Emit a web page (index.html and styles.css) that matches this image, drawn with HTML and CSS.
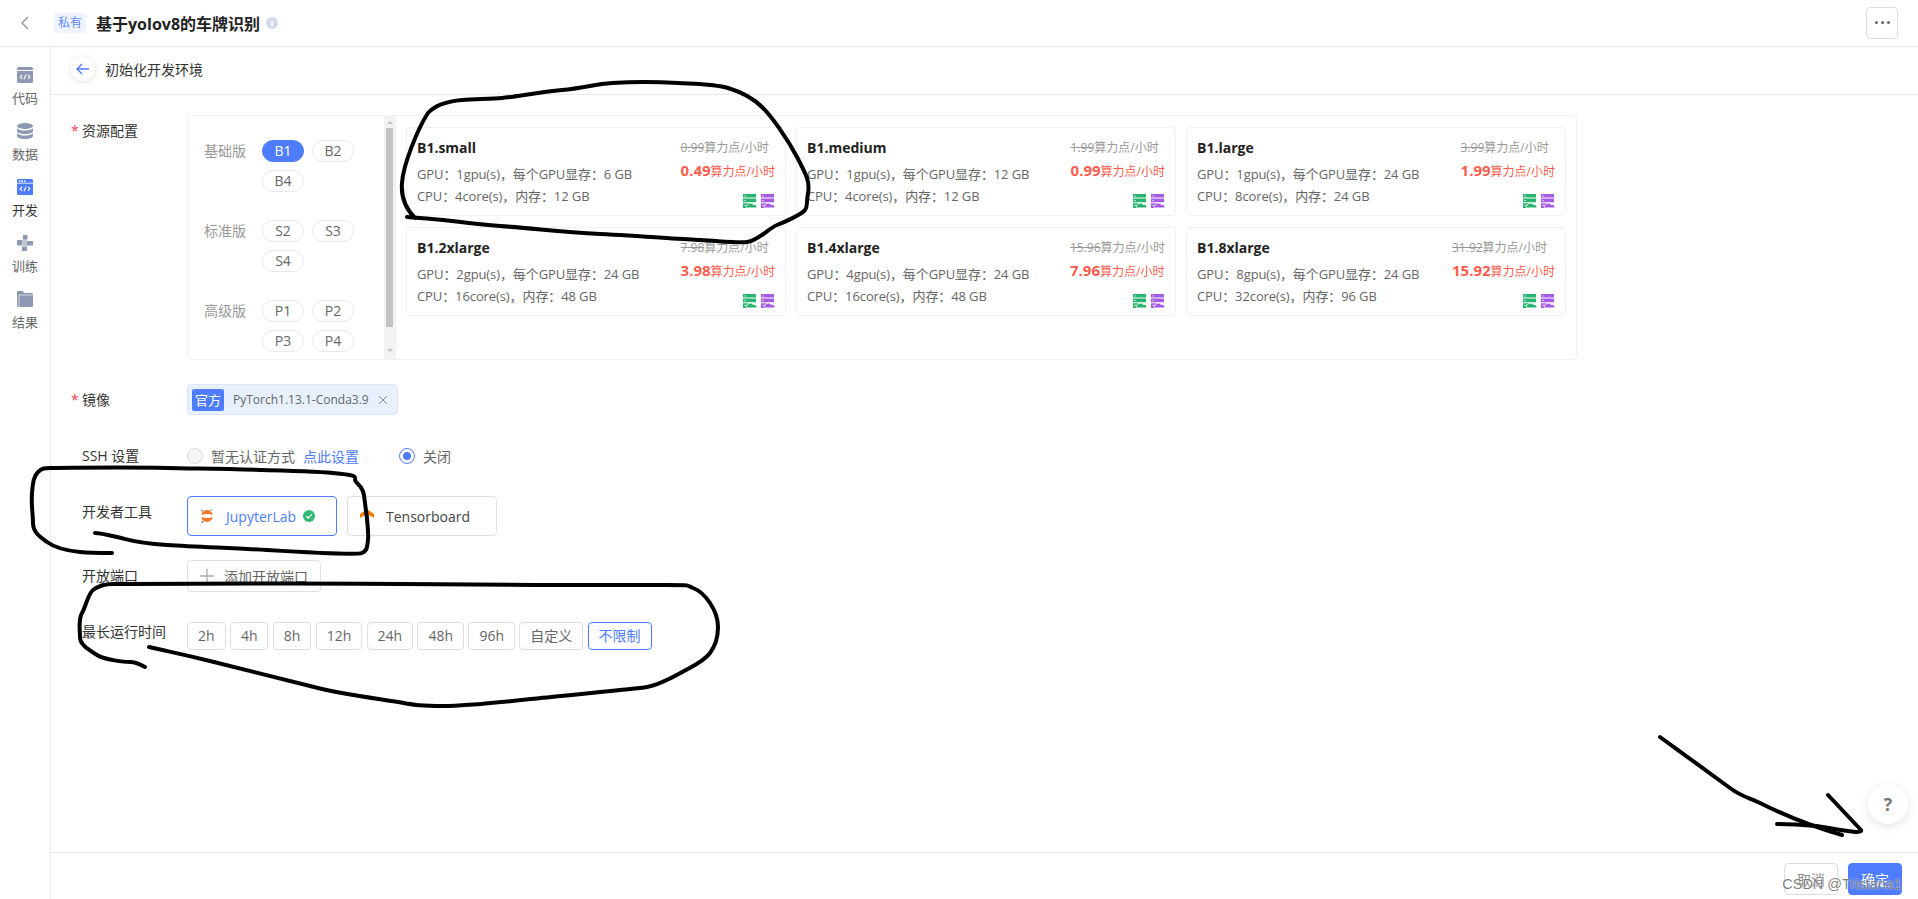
FILE: index.html
```html
<!DOCTYPE html>
<html lang="zh-CN">
<head>
    <meta charset="UTF-8">
    <title>初始化开发环境</title>
    <link rel="stylesheet" href="styles.css">
</head>
<body>
    <svg width="0" height="0" class="defs">
        <symbol id="server" viewBox="0 0 14 14">
            <path fill="currentColor" d="M0 0h13v3.6H0zM0 4.6h13v3.6H0zM0 9.2h6V14H0z"/>
            <path fill="#fff" d="M1.5 1.4h1.2v1H1.5zM1.5 6h1.2v1H1.5zM1.5 10.8h1.2v1H1.5z"/>
            <path fill="currentColor" stroke="#fff" stroke-width="1" d="M4.6 14c-1.6 0-2.2-2.6-.2-3 .5-2.2 4.400-2.700 5.600-.6 2-.4 4.500.6 4 3.600z"/>
        </symbol>
        <symbol id="code" viewBox="0 0 16 16">
            <path fill="currentColor" d="M1.500 0h13A1.500 1.500 0 0 1 16 1.500V3H0V1.500A1.500 1.500 0 0 1 1.500 0zM0 4h16v10.500a1.500 1.500 0 0 1-1.500 1.500h-13A1.500 1.500 0 0 1 0 14.500z"/>
            <path fill="none" stroke="#fff" stroke-width="1.100" d="M5 7.800 3.200 9.800 5 11.800M11 7.800l1.800 2-1.800 2M9 7.400 7 12.200"/>
        </symbol>
    </svg>

    <header class="topbar">
        <svg class="chevron" width="10" height="14" viewBox="0 0 10 14"><path d="M8 1 2 7l6 6" fill="none" stroke="#8a8f99" stroke-width="1.300"/></svg>
        <span class="private-tag">私有</span>
        <h1 class="project-title">基于yolov8的车牌识别</h1>
        <span class="info-icon">i</span>
        <button class="more-btn"><i></i><i></i><i></i></button>
    </header>

    <div class="shell">
        <nav class="sidebar">
            <a class="nav-item">
                <svg class="nav-icon" width="16" height="16"><use href="#code"/></svg>
                代码
            </a>
            <a class="nav-item">
                <svg class="nav-icon" width="16" height="16" viewBox="0 0 16 16">
                    <ellipse cx="8" cy="3" rx="8" ry="3" fill="currentColor"/>
                    <path fill="currentColor" d="M0 5.200C1.500 7 5 7.500 8 7.500s6.500-.5 8-2.300V8c0 1.700-3.600 3-8 3S0 9.700 0 8zM0 10.200C1.500 12 5 12.500 8 12.500s6.500-.5 8-2.300V13c0 1.700-3.600 3-8 3s-8-1.300-8-3z"/>
                </svg>
                数据
            </a>
            <a class="nav-item is-current">
                <svg class="nav-icon" width="16" height="16" viewBox="0 0 16 16">
                    <path fill="#4e7cff" d="M1.500 0h13A1.500 1.500 0 0 1 16 1.500V16H1.500A1.500 1.500 0 0 1 0 14.500V1.500A1.500 1.500 0 0 1 1.500 0z"/>
                    <path fill="none" stroke="#fff" stroke-width=".8" d="M0 4.200h16"/>
                    <path fill="#fff" d="M2 1.500h1.500V3H2zM4.500 1.500H6V3H4.500zM7 1.500h1.500V3H7z"/>
                    <path fill="none" stroke="#fff" stroke-width="1.100" d="M5 7.800 3.200 9.800 5 11.800M11 7.800l1.800 2-1.800 2M9 7.400 7 12.200"/>
                </svg>
                开发
            </a>
            <a class="nav-item">
                <svg class="nav-icon" width="16" height="16" viewBox="0 0 16 16">
                    <path fill="currentColor" d="M0 5h5.500v5.500H0zM6 0h4.500v4.500H6zM10 6h6v4.500h-6zM5 11.500h5V16H5z"/>
                    <path fill="currentColor" d="M6 4.500h4V11H6z" opacity=".55"/>
                </svg>
                训练
            </a>
            <a class="nav-item">
                <svg class="nav-icon" width="16" height="16" viewBox="0 0 16 16">
                    <path fill="currentColor" d="M1 0h4.500l2 2H15a1 1 0 0 1 1 1v12a1 1 0 0 1-1 1H1a1 1 0 0 1-1-1V1a1 1 0 0 1 1-1z"/>
                    <path fill="none" stroke="#fff" stroke-width=".8" opacity=".8" d="M2 16V4h14"/>
                </svg>
                结果
            </a>
        </nav>

        <main class="main">
            <div class="subheader">
                <button class="back-btn">
                    <svg width="14" height="12" viewBox="0 0 14 12"><path d="M6 1 1 6l5 5M1 6h12" fill="none" stroke="#4e7cff" stroke-width="1.300"/></svg>
                </button>
                <span>初始化开发环境</span>
            </div>

            <div class="form">
                <div class="form-row">
                    <label class="form-label"><b>*</b>资源配置</label>
                    <div class="resource-panel">
                        <div class="spec-side">
                            <div class="spec-groups">
                                <div class="spec-group">
                                    <span class="spec-name">基础版</span>
                                    <div class="pills">
                                        <span class="pill is-active">B1</span>
                                        <span class="pill">B2</span>
                                        <span class="pill">B4</span>
                                    </div>
                                </div>
                                <div class="spec-group">
                                    <span class="spec-name">标准版</span>
                                    <div class="pills">
                                        <span class="pill">S2</span>
                                        <span class="pill">S3</span>
                                        <span class="pill">S4</span>
                                    </div>
                                </div>
                                <div class="spec-group">
                                    <span class="spec-name">高级版</span>
                                    <div class="pills">
                                        <span class="pill">P1</span>
                                        <span class="pill">P2</span>
                                        <span class="pill">P3</span>
                                        <span class="pill">P4</span>
                                    </div>
                                </div>
                            </div>
                            <div class="scrollbar">
                                <i class="arrow-up"></i>
                                <div class="thumb"></div>
                                <i class="arrow-down"></i>
                            </div>
                        </div>

                        <div class="cards">
                            <div class="card">
                                <div class="card-info">
                                    <h3>B1.small</h3>
                                    <p>GPU：1gpu(s)，每个GPU显存：6 GB</p>
                                    <p>CPU：4core(s)，内存：12 GB</p>
                                </div>
                                <div class="card-price">
                                    <div class="price-old"><s>0.99</s>算力点/小时</div>
                                    <div class="price-now"><b>0.49</b>算力点/小时</div>
                                    <div class="card-icons">
                                        <svg class="green" width="14" height="14"><use href="#server"/></svg>
                                        <svg class="purple" width="14" height="14"><use href="#server"/></svg>
                                    </div>
                                </div>
                            </div>
                            <div class="card">
                                <div class="card-info">
                                    <h3>B1.medium</h3>
                                    <p>GPU：1gpu(s)，每个GPU显存：12 GB</p>
                                    <p>CPU：4core(s)，内存：12 GB</p>
                                </div>
                                <div class="card-price">
                                    <div class="price-old"><s>1.99</s>算力点/小时</div>
                                    <div class="price-now"><b>0.99</b>算力点/小时</div>
                                    <div class="card-icons">
                                        <svg class="green" width="14" height="14"><use href="#server"/></svg>
                                        <svg class="purple" width="14" height="14"><use href="#server"/></svg>
                                    </div>
                                </div>
                            </div>
                            <div class="card">
                                <div class="card-info">
                                    <h3>B1.large</h3>
                                    <p>GPU：1gpu(s)，每个GPU显存：24 GB</p>
                                    <p>CPU：8core(s)，内存：24 GB</p>
                                </div>
                                <div class="card-price">
                                    <div class="price-old"><s>3.99</s>算力点/小时</div>
                                    <div class="price-now"><b>1.99</b>算力点/小时</div>
                                    <div class="card-icons">
                                        <svg class="green" width="14" height="14"><use href="#server"/></svg>
                                        <svg class="purple" width="14" height="14"><use href="#server"/></svg>
                                    </div>
                                </div>
                            </div>
                            <div class="card">
                                <div class="card-info">
                                    <h3>B1.2xlarge</h3>
                                    <p>GPU：2gpu(s)，每个GPU显存：24 GB</p>
                                    <p>CPU：16core(s)，内存：48 GB</p>
                                </div>
                                <div class="card-price">
                                    <div class="price-old"><s>7.98</s>算力点/小时</div>
                                    <div class="price-now"><b>3.98</b>算力点/小时</div>
                                    <div class="card-icons">
                                        <svg class="green" width="14" height="14"><use href="#server"/></svg>
                                        <svg class="purple" width="14" height="14"><use href="#server"/></svg>
                                    </div>
                                </div>
                            </div>
                            <div class="card">
                                <div class="card-info">
                                    <h3>B1.4xlarge</h3>
                                    <p>GPU：4gpu(s)，每个GPU显存：24 GB</p>
                                    <p>CPU：16core(s)，内存：48 GB</p>
                                </div>
                                <div class="card-price">
                                    <div class="price-old"><s>15.96</s>算力点/小时</div>
                                    <div class="price-now"><b>7.96</b>算力点/小时</div>
                                    <div class="card-icons">
                                        <svg class="green" width="14" height="14"><use href="#server"/></svg>
                                        <svg class="purple" width="14" height="14"><use href="#server"/></svg>
                                    </div>
                                </div>
                            </div>
                            <div class="card">
                                <div class="card-info">
                                    <h3>B1.8xlarge</h3>
                                    <p>GPU：8gpu(s)，每个GPU显存：24 GB</p>
                                    <p>CPU：32core(s)，内存：96 GB</p>
                                </div>
                                <div class="card-price">
                                    <div class="price-old"><s>31.92</s>算力点/小时</div>
                                    <div class="price-now"><b>15.92</b>算力点/小时</div>
                                    <div class="card-icons">
                                        <svg class="green" width="14" height="14"><use href="#server"/></svg>
                                        <svg class="purple" width="14" height="14"><use href="#server"/></svg>
                                    </div>
                                </div>
                            </div>
                        </div>
                    </div>
                </div>

                <div class="form-row">
                    <label class="form-label"><b>*</b>镜像</label>
                    <div class="image-select">
                        <span class="official-tag">官方</span>
                        <span class="image-name">PyTorch1.13.1-Conda3.9</span>
                        <svg width="10" height="10" viewBox="0 0 10 10"><path d="M1 1l8 8M9 1 1 9" stroke="#8a8f99" stroke-width="1"/></svg>
                    </div>
                </div>

                <div class="form-row">
                    <label class="form-label no-star">SSH 设置</label>
                    <div class="ssh-options">
                        <span class="radio"></span>
                        <span class="radio-text">暂无认证方式</span>
                        <a class="link">点此设置</a>
                        <span class="radio is-checked"></span>
                        <span class="radio-text">关闭</span>
                    </div>
                </div>

                <div class="form-row">
                    <label class="form-label no-star">开发者工具</label>
                    <div class="tools">
                        <div class="tool is-selected">
                            <svg class="tool-icon" width="14" height="16" viewBox="0 0 14 16">
                                <path d="M1.500 7a5.500 5 0 0 1 11 0 7 2.500 0 0 0-11 0zM1.500 9a5.500 5 0 0 0 11 0 7 2.500 0 0 1-11 0z" fill="#f37726"/>
                                <circle cx="2" cy="2.500" r=".9" fill="#767677"/><circle cx="11.500" cy="2" r=".7" fill="#767677"/><circle cx="2.500" cy="14" r="1" fill="#767677"/>
                            </svg>
                            JupyterLab
                            <svg class="tool-check" width="12" height="12" viewBox="0 0 12 12"><circle cx="6" cy="6" r="6" fill="#2fb974"/><path d="M3.200 6.200 5.200 8l3.600-3.600" fill="none" stroke="#fff" stroke-width="1.300"/></svg>
                        </div>
                        <div class="tool">
                            <svg class="tool-icon" width="14" height="14" viewBox="0 0 14 14">
                                <path fill="#f57c00" d="M7 0l7 5v4L9 6v8H5V6L0 9V5z"/>
                            </svg>
                            Tensorboard
                        </div>
                    </div>
                </div>

                <div class="form-row">
                    <label class="form-label no-star">开放端口</label>
                    <button class="add-port">
                        <svg width="14" height="14" viewBox="0 0 14 14"><path d="M7 0v14M0 7h14" stroke="#a6a9b0" stroke-width="1.300"/></svg>
                        添加开放端口
                    </button>
                </div>

                <div class="form-row time-row">
                    <label class="form-label no-star">最长运行时间</label>
                    <div class="time-options">
                        <span class="time-btn">2h</span>
                        <span class="time-btn">4h</span>
                        <span class="time-btn">8h</span>
                        <span class="time-btn">12h</span>
                        <span class="time-btn">24h</span>
                        <span class="time-btn">48h</span>
                        <span class="time-btn">96h</span>
                        <span class="time-btn">自定义</span>
                        <span class="time-btn is-selected">不限制</span>
                    </div>
                </div>
            </div>

            <div class="footer">
                <button class="btn">取消</button>
                <button class="btn btn-primary">确定</button>
            </div>
        </main>
    </div>

    <button class="help-btn">?</button>

    <!-- pen marks drawn over the screenshot -->
    <svg class="ink" width="1918" height="899" viewBox="0 0 1918 899">
        <path d="M415 218C405 208 401 195 402 183C403 165 418 128 428 113C436 104 450 101 462 100S490 99 502 98S540 92 562 90S595 84 612 83S660 82 678 83S715 84 728 88S752 97 762 107S787 138 797 157S810 182 808 193S808 206 805 210S785 222 777 225S758 241 747 242S720 241 700 240S640 236 600 234S540 229 500 226S465 222 443 220S420 218 407 217"/>
        <path d="M112 553C100 553 90 553 80 552S55 548 47 542S33 532 33 523S31 505 32 493S34 476 38 472S45 468 50 468S120 467 167 468S300 470 333 473S350 477 357 483S364 495 365 503S369 530 368 540S366 551 362 553S300 552 267 550S200 547 167 545S130 540 117 537S100 533 95 533"/>
        <path d="M145 667C138 663 135 662 130 662S105 660 97 655S80 645 80 637S78 620 82 613S88 594 93 590S105 584 113 584S300 583 400 584S520 585 567 585S640 585 667 585S685 585 693 588S706 597 710 603S718 618 718 627S716 645 710 653S695 665 686 670S660 685 647 687S590 693 551 697S470 706 444 706S415 705 398 702S345 695 314 687S250 671 214 662S170 652 149 647"/>
        <path d="M1660 737C1685 755 1712 775 1730 788C1742 797 1750 798 1760 803C1780 813 1810 826 1842 835"/>
        <path d="M1777 824C1790 824 1805 825 1817 826C1830 828 1845 831 1856 832Q1862 832 1861 830L1828 795"/>
    </svg>

    <span class="watermark">CSDN @Tristana1</span>
</body>
</html>
```

FILE: styles.css
```css
* {
    margin: 0;
    padding: 0;
    box-sizing: border-box;
}

body {
    position: relative;
    width: 1918px;
    height: 899px;
    overflow: hidden;
    background: #fff;
    color: #333;
    font-family: 'Open Sans', 'Noto Sans CJK SC', sans-serif;
    font-size: 14px;
}

button {
    font-family: inherit;
    background: #fff;
    border: none;
}

.defs {
    position: absolute;
}

/* top bar */
.topbar {
    height: 47px;
    display: flex;
    align-items: center;
    padding: 0 20px 1px 20px;
    border-bottom: 1px solid #e8e9f0;
}

.chevron {
    margin-right: 24px;
}

.private-tag {
    width: 32px;
    height: 20px;
    line-height: 20px;
    text-align: center;
    font-size: 12px;
    color: #5f8bff;
    background: #eef3ff;
    border-radius: 2px;
    margin-right: 10px;
}

.project-title {
    font-size: 16px;
    font-weight: 700;
    color: #222;
}

.info-icon {
    width: 12px;
    height: 12px;
    line-height: 12px;
    border-radius: 50%;
    margin-left: 6px;
    text-align: center;
    font-size: 9px;
    font-weight: 700;
    color: #fff;
    background: #d3d9e8;
}

.more-btn {
    margin-left: auto;
    width: 32px;
    height: 32px;
    display: flex;
    align-items: center;
    justify-content: center;
    gap: 3px;
    border: 1px solid #dedede;
    border-radius: 4px;
}

.more-btn i {
    width: 3px;
    height: 3px;
    border-radius: 50%;
    background: #666;
}

.shell {
    display: flex;
    height: 852px;
}

/* left nav */
.sidebar {
    width: 51px;
    flex-shrink: 0;
    border-right: 1px solid #e8e9f0;
    padding-top: 20px;
}

.nav-item {
    height: 56px;
    display: flex;
    flex-direction: column;
    align-items: center;
    font-size: 13px;
    line-height: 18px;
    color: #666;
}

.nav-icon {
    color: #8e98b3;
    margin-bottom: 6px;
    flex-shrink: 0;
}

.nav-item.is-current {
    color: #333;
}

/* main column */
.main {
    flex: 1;
    display: flex;
    flex-direction: column;
    min-width: 0;
}

.subheader {
    height: 48px;
    display: flex;
    align-items: center;
    gap: 10px;
    padding: 0 0 3px 20px;
    border-bottom: 1px solid #e8e9f0;
    color: #333;
}

.back-btn {
    width: 24px;
    height: 24px;
    border-radius: 50%;
    display: flex;
    align-items: center;
    justify-content: center;
    box-shadow: 0 1px 6px rgba(60, 70, 100, 0.14);
}

.form {
    flex: 1;
    padding: 20px 0 0 20px;
}

.form-row {
    display: flex;
    align-items: flex-start;
    margin-bottom: 24px;
}

.form-label {
    width: 116px;
    flex-shrink: 0;
    line-height: 32px;
    color: #333;
}

.form-label b {
    display: inline-block;
    width: 11px;
    color: #f5404f;
    font-weight: 400;
}

.form-label.no-star {
    padding-left: 11px;
}

/* resource panel */
.resource-panel {
    width: 1390px;
    height: 245px;
    display: flex;
    border: 1px solid #f0f0f3;
    border-radius: 4px;
}

.spec-side {
    width: 208px;
    flex-shrink: 0;
    display: flex;
    border-right: 1px solid #f0f0f3;
}

.spec-groups {
    flex: 1;
    padding: 24px 0 0 16px;
}

.spec-group {
    display: flex;
    margin-bottom: 28px;
}

.spec-name {
    width: 58px;
    flex-shrink: 0;
    line-height: 22px;
    color: #999;
}

.pills {
    display: flex;
    flex-wrap: wrap;
    gap: 8px;
    width: 104px;
    align-content: flex-start;
}

.pill {
    height: 22px;
    line-height: 20px;
    width: 42px;
    text-align: center;
    border: 1px solid #e8e9f0;
    border-radius: 11px;
    color: #666;
}

.pill.is-active {
    background: #4e7cff;
    border-color: #4e7cff;
    color: #fff;
}

.scrollbar {
    width: 11px;
    flex-shrink: 0;
    background: #f3f3f3;
    display: flex;
    flex-direction: column;
    align-items: center;
    padding: 5px 0;
}

.scrollbar .thumb {
    width: 7px;
    height: 199px;
    margin: 4px 0 22px;
    background: #c4c4c4;
}

.arrow-up {
    width: 0;
    height: 0;
    border: 3px solid transparent;
    border-top: none;
    border-bottom: 3px solid #c0c0c0;
}

.arrow-down {
    width: 0;
    height: 0;
    border: 3px solid transparent;
    border-bottom: none;
    border-top: 3px solid #c0c0c0;
}

.cards {
    flex: 1;
    display: grid;
    grid-template-columns: repeat(3, 1fr);
    grid-template-rows: 89px 89px;
    gap: 11px 10px;
    padding: 11px 10px 0 10px;
}

.card {
    display: flex;
    justify-content: space-between;
    padding: 10px;
    border: 1px solid #f0f0f3;
    border-radius: 4px;
}

.card h3 {
    font-size: 14px;
    line-height: 20px;
    font-weight: 700;
    color: #222;
    margin-bottom: 5px;
}

.card p {
    font-size: 13px;
    line-height: 22px;
    letter-spacing: -0.1px;
    color: #666;
}

.price-old {
    font-size: 12px;
    line-height: 20px;
    color: #999;
}

.price-now {
    font-size: 12px;
    line-height: 24px;
    color: #ff5c4d;
}

.price-now b {
    font-size: 15px;
}

.card-icons {
    display: flex;
    justify-content: flex-end;
    gap: 4px;
    margin-top: 10px;
}

.green {
    color: #27b46e;
}

.purple {
    color: #a45be6;
}

/* image */
.image-select {
    width: 211px;
    height: 31px;
    display: flex;
    align-items: center;
    padding-left: 4px;
    background: #e8f0fe;
    border: 1px solid #dde6f5;
    border-radius: 4px;
}

.official-tag {
    width: 32px;
    height: 22px;
    line-height: 22px;
    text-align: center;
    font-size: 13px;
    color: #fff;
    background: #4e7cff;
    border-radius: 2px;
    margin-right: 9px;
}

.image-name {
    font-size: 12px;
    color: #666;
    margin-right: 9px;
}

/* ssh */
.ssh-options {
    height: 32px;
    display: flex;
    align-items: center;
}

.radio {
    width: 16px;
    height: 16px;
    border: 1px solid #dcdcdc;
    border-radius: 50%;
    background: #f5f5f5;
}

.radio.is-checked {
    margin-left: 40px;
    background: #fff;
    border-color: #4e7cff;
    display: flex;
    align-items: center;
    justify-content: center;
}

.radio.is-checked::after {
    content: '';
    width: 8px;
    height: 8px;
    border-radius: 50%;
    background: #4e7cff;
}

.radio-text {
    margin-left: 8px;
    color: #666;
}

.link {
    margin-left: 8px;
    color: #4e7cff;
}

/* dev tools */
.tools {
    display: flex;
    gap: 10px;
}

.tool {
    width: 150px;
    height: 40px;
    display: flex;
    align-items: center;
    padding-left: 12px;
    border: 1px solid #dedfe6;
    border-radius: 4px;
    color: #444;
}

.tool-icon {
    margin-right: 12px;
}

.tool.is-selected {
    border-color: #4e7cff;
    color: #4e7cff;
}

.tool-check {
    margin-left: 7px;
}

.add-port {
    width: 134px;
    height: 32px;
    display: flex;
    align-items: center;
    gap: 10px;
    padding-left: 12px;
    font-size: 14px;
    color: #666;
    border: 1px solid #dedfe6;
    border-radius: 4px;
}

/* run time */
.time-options {
    display: flex;
    gap: 4.300px;
    margin-top: 6px;
}

.time-btn {
    height: 28px;
    line-height: 26px;
    padding: 0 10px;
    border: 1px solid #dedfe6;
    border-radius: 4px;
    color: #666;
    text-align: center;
}

.time-btn.is-selected {
    border-color: #4e7cff;
    color: #4e7cff;
}

/* bottom */
.footer {
    height: 47px;
    display: flex;
    justify-content: flex-end;
    align-items: flex-start;
    gap: 10px;
    padding: 10px 16px 0 0;
    border-top: 1px solid #e8e9f0;
}

.btn {
    width: 54px;
    height: 32px;
    font-size: 14px;
    color: #8c8c8c;
    border: 1px solid #dcdcdc;
    border-radius: 4px;
}

.btn-primary {
    background: #4e7cff;
    border-color: #4e7cff;
    color: #fff;
}

.help-btn {
    position: absolute;
    left: 1868px;
    top: 784px;
    width: 40px;
    height: 40px;
    border-radius: 50%;
    font-size: 18px;
    font-weight: 700;
    color: #777;
    box-shadow: 0 2px 10px rgba(60, 70, 100, 0.15);
}

.ink {
    position: absolute;
    left: 0;
    top: 0;
    pointer-events: none;
    fill: none;
    stroke: #000;
    stroke-width: 4;
    stroke-linecap: round;
    stroke-linejoin: round;
}

.watermark {
    position: absolute;
    right: 16px;
    top: 874px;
    font-family: 'Liberation Sans', sans-serif;
    font-size: 14.500px;
    line-height: 20px;
    color: rgba(120, 120, 120, 0.95);
    text-shadow: 0 0 2px rgba(255, 255, 255, 0.9);
}
```
